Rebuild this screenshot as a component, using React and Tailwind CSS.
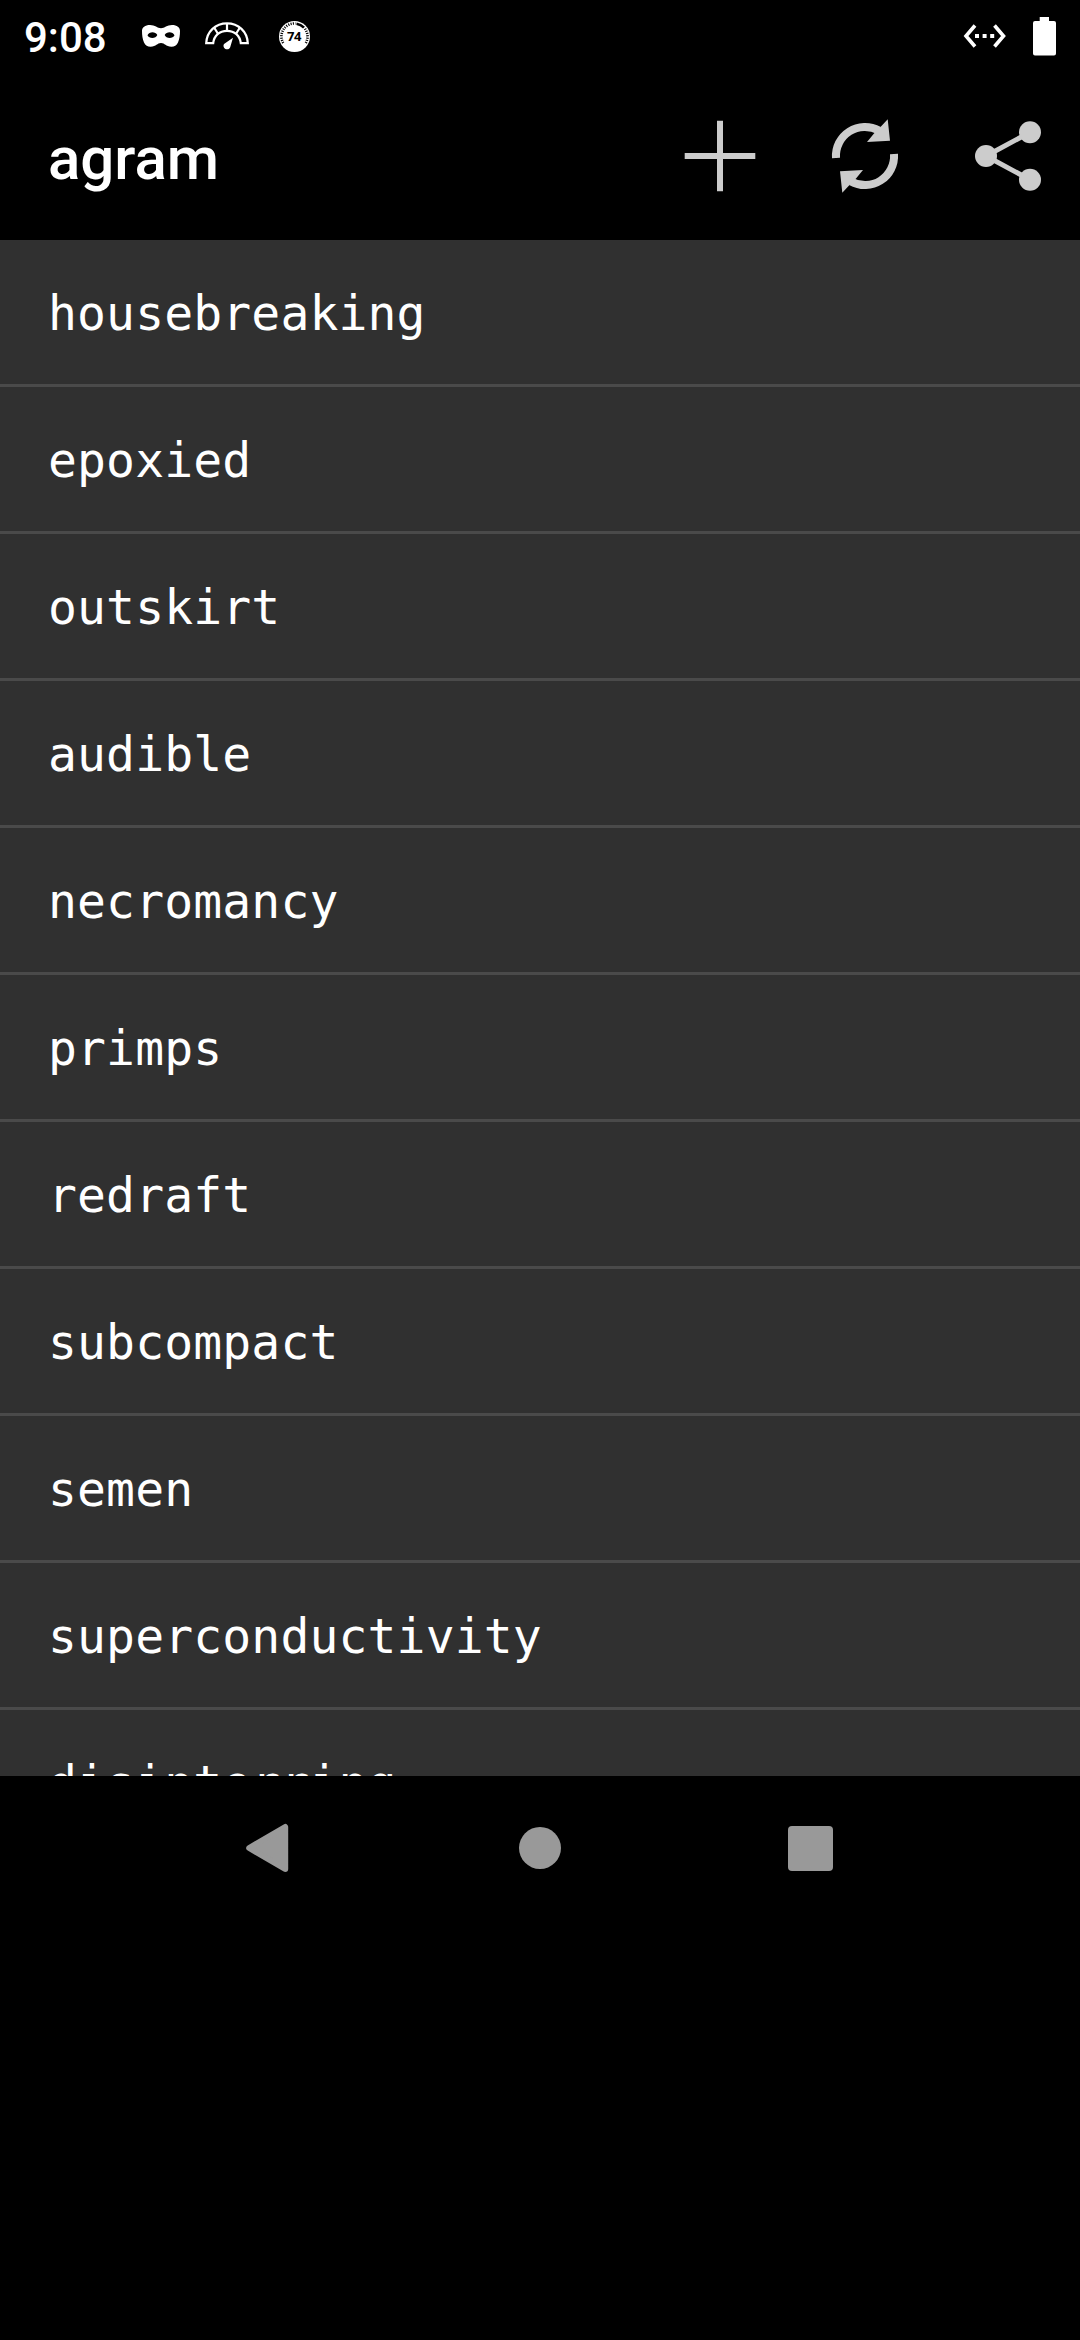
const words = [
  'housebreaking',
  'epoxied',
  'outskirt',
  'audible',
  'necromancy',
  'primps',
  'redraft',
  'subcompact',
  'semen',
  'superconductivity',
  'disinterring',
];

function MaskIcon() {
  return (
    <svg className="ml-[35px] h-[24px] w-[40px]" viewBox="141 24 40 24">
      <path
        fill="#fff"
        fillRule="evenodd"
        d="M142 31C142 27.500 145 25 150 25C155 25 157.500 28.200 161 28.200S167 25 172 25C177 25 180 27.500 180 31C180 35 179.500 39 178 42.500C176.500 45.500 174.500 46.700 171.500 46.700C165.500 46.700 165 43 161 43S156.500 46.700 150.500 46.700C147.500 46.700 145.500 45.500 144 42.500C142.500 39 142 35 142 31ZM147.500 35.300C149 31.500 155.500 31.200 157.300 35C156 38.800 149 38.800 147.500 35.300ZM174.500 35.300C173 31.500 166.500 31.200 164.700 35C166 38.800 173 38.800 174.500 35.300Z"
      />
    </svg>
  );
}

function GaugeIcon() {
  return (
    <svg className="ml-[23px] h-[30px] w-[46px]" viewBox="204 22 46 30">
      <g fill="none" stroke="#fff" strokeWidth="2.200">
        <path d="M206.200 44.200C206.800 32.500 215.500 24.400 227 24.400S247.200 32.500 247.800 44.200H240.800C240 36.500 234.500 31.800 227 31.800S214 36.500 213.200 44.200Z" />
        <path d="M227 24V32M213.800 28L217.800 34.500M240.200 28L236.200 34.500" />
      </g>
      <path fill="#fff" d="M233 38.800L230.200 48.200A3.500 3.500 0 1 1 224 45Z" />
    </svg>
  );
}

function ScoreIcon() {
  return (
    <span className="ml-[28px] flex h-[32px] w-[32px] items-center justify-center">
      <span className="grid h-[31px] w-[31px] place-items-center rounded-full bg-white">
        <svg className="col-start-1 row-start-1 h-[31px] w-[31px]" viewBox="-15.500 -15.500 31 31">
          <path fill="none" stroke="#000" strokeWidth="2.600" strokeDasharray="1.100 1.200" d="M-11.300 6.500A13 13 0 0 1 1 -13" />
          <path fill="none" stroke="#000" strokeWidth="2.600" d="M2 -12.800A13 13 0 0 1 9.500 -8.900" />
          <path fill="none" stroke="#000" strokeWidth="2.600" strokeDasharray="1.100 1.200" d="M10.500 -7.700A13 13 0 0 1 11.300 6.500" />
        </svg>
        <span className="col-start-1 row-start-1 font-['Open_Sans',sans-serif] text-[13px] leading-none font-bold tracking-[-0.4px] text-black">
          74
        </span>
      </span>
    </span>
  );
}

function StatusBar() {
  return (
    <header className="flex h-[72px] items-center pl-[24px] pr-[23px]">
      <span className="w-[82px] pt-[2px] font-['Roboto',sans-serif] text-[42px] leading-[49px] font-medium text-white">9:08</span>
      <MaskIcon />
      <GaugeIcon />
      <ScoreIcon />
      <svg className="ml-auto h-[26px] w-[44px]" viewBox="963 23.500 44 26">
        <path fill="none" stroke="#fff" strokeWidth="3.600" d="M975 26L966 36.500L975 47M994.500 26L1003.500 36.500L994.500 47" />
        <path fill="#fff" d="M975 34.500h4v4h-4zM982.600 34.500h4v4h-4zM990.200 34.500h4v4h-4z" />
      </svg>
      <svg className="ml-[25px] h-[40px] w-[25px]" viewBox="1032 15 25 40">
        <path fill="#fff" d="M1039.700 16h9.300v4h5q2 0 2 2v30.500q0 2 -2 2h-19q-2 0 -2 -2V22q0 -2 2 -2h4.700z" />
      </svg>
    </header>
  );
}

function RefreshHalf() {
  return (
    <>
      <path fill="none" stroke="#ccc" strokeWidth="8" d="M-29 2A29 29 0 0 1 14 -25.400" />
      <path fill="#ccc" d="M22.700 -36.700L25 -15.300L2 -14L9 -22.500L15.500 -29Z" />
    </>
  );
}

function Toolbar() {
  return (
    <nav className="flex h-[168px] items-center pl-[48px]">
      <h1 className="flex-1 pt-[5px] font-['Roboto',sans-serif] text-[60px] leading-[70px] font-medium text-white">agram</h1>
      <button className="flex h-[168px] w-[144px] justify-center pt-[44px]" aria-label="Add">
        <svg className="h-[80px] w-[80px]" viewBox="-40 -40 80 80">
          <path stroke="#ccc" strokeWidth="6" d="M-35.300 0H35.300M0 -35.300V35.300" />
        </svg>
      </button>
      <button className="flex h-[168px] w-[144px] justify-center pt-[44px]" aria-label="Refresh">
        <svg className="h-[80px] w-[80px]" viewBox="-41 -40 80 80">
          <RefreshHalf />
          <g transform="rotate(180)">
            <RefreshHalf />
          </g>
        </svg>
      </button>
      <button className="flex h-[168px] w-[144px] justify-center pt-[44px]" aria-label="Share">
        <svg className="h-[80px] w-[80px]" viewBox="968 116 80 80">
          <path fill="none" stroke="#ccc" strokeWidth="5" d="M1030 132.300L986 156L1030 179.700" />
          <g fill="#ccc">
            <circle cx="986" cy="156" r="11" />
            <circle cx="1030" cy="132.300" r="11" />
            <circle cx="1030" cy="179.700" r="11" />
          </g>
        </svg>
      </button>
    </nav>
  );
}

function NavigationBar() {
  return (
    <footer className="flex h-[144px] items-center justify-center">
      <div className="flex w-[270px] justify-center pr-[6px]">
        <svg className="h-[50px] w-[44px]" viewBox="245 1823 44 50">
          <path fill="#999" stroke="#999" strokeWidth="6" strokeLinejoin="round" d="M249.200 1848L285.200 1827V1869Z" />
        </svg>
      </div>
      <div className="flex w-[270px] justify-center">
        <div className="h-[42px] w-[42px] rounded-full bg-[#999]" />
      </div>
      <div className="flex w-[270px] justify-center">
        <div className="h-[45px] w-[45px] rounded-[4px] bg-[#999]" />
      </div>
    </footer>
  );
}

export default function App() {
  return (
    <div className="flex h-[2340px] w-[1080px] flex-col overflow-hidden bg-black">
      <StatusBar />
      <Toolbar />
      <main className="h-[1536px] overflow-hidden bg-[#303030]">
        <ul>
          {words.map((word) => (
            <li
              key={word}
              className="flex h-[147px] items-center border-b-[3px] border-[#4a4a4a] pt-[2px] pl-[48px] font-['DejaVu_Sans_Mono',monospace] text-[48px] leading-[56px] tracking-[0.15px] text-white"
            >
              {word}
            </li>
          ))}
        </ul>
      </main>
      <NavigationBar />
    </div>
  );
}
